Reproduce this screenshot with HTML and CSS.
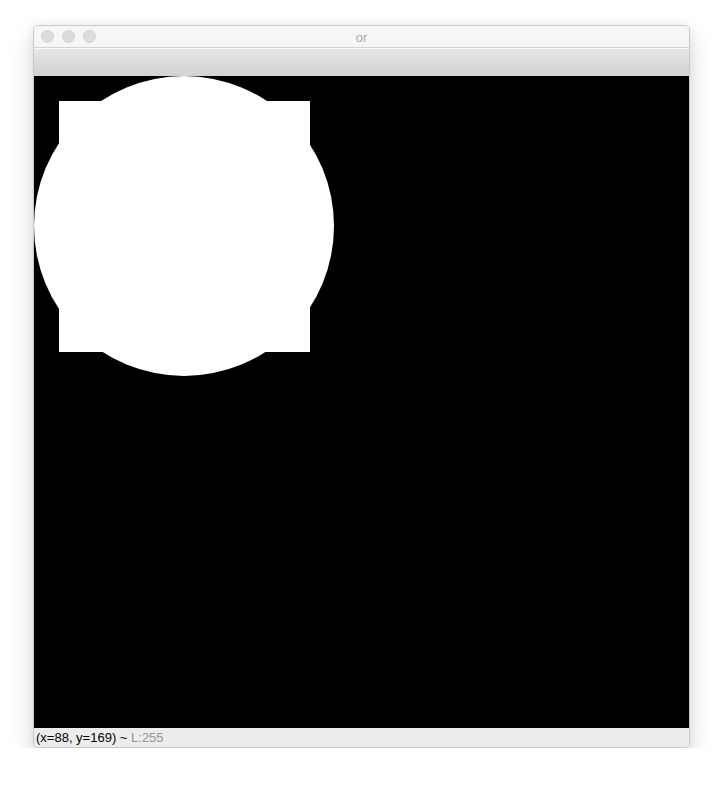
FILE: index.html
```html
<!DOCTYPE html>
<html>
<head>
<meta charset="utf-8">
<link rel="stylesheet" href="styles.css">
</head>
<body>
<div class="window">
  <div class="titlebar">
    <div class="lights">
      <span class="light"></span>
      <span class="light"></span>
      <span class="light"></span>
    </div>
    <div class="title">or</div>
  </div>
  <div class="toolbar"></div>
  <div class="canvas">
    <svg width="655" height="652" viewBox="0 0 655 652">
      <rect x="0" y="0" width="655" height="652" fill="#000"/>
      <circle cx="150" cy="150" r="150" fill="#fff"/>
      <rect x="25" y="25" width="251" height="251" fill="#fff"/>
    </svg>
  </div>
  <div class="statusbar"><span class="coords">(x=88, y=169) ~</span> <span class="lum">L:255</span></div>
</div>
</body>
</html>
```

FILE: styles.css
```css
html, body {
  margin: 0;
  padding: 0;
  background: #ffffff;
}
body {
  padding: 25px 0 0 33px;
}
.window {
  width: 655px;
  border: 1px solid #c9c9c9;
  border-radius: 5px;
  overflow: hidden;
  box-shadow: 0 10px 24px rgba(0,0,0,0.16), 0 0 8px rgba(0,0,0,0.06);
  background: #ececec;
  display: flex;
  flex-direction: column;
}
.titlebar {
  height: 21px;
  background: #f6f6f6;
  border-bottom: 1px solid #d1d1d1;
  display: flex;
  align-items: center;
  position: relative;
}
.lights {
  display: flex;
  gap: 8px;
  padding-left: 7px;
}
.light {
  width: 11px;
  height: 11px;
  border-radius: 50%;
  background: #dcdcdc;
  border: 0.5px solid #d2d2d2;
}
.title {
  position: absolute;
  left: 0;
  right: 0;
  top: 4px;
  text-align: center;
  font-family: "Liberation Sans", Arial, sans-serif;
  font-size: 13px;
  color: #a8a8a8;
}
.toolbar {
  height: 27px;
  border-top: 1px solid #fafafa;
  background: linear-gradient(#e6e6e6, #d2d2d2);
}
.canvas {
  height: 652px;
  background: #000;
  line-height: 0;
}
.canvas svg {
  display: block;
}
.statusbar {
  height: 19px;
  background: #ececec;
  font-family: "Liberation Sans", Arial, sans-serif;
  font-size: 13px;
  line-height: 19px;
  padding-left: 2px;
  color: #000;
  white-space: nowrap;
}
.lum {
  color: #959595;
}
```
